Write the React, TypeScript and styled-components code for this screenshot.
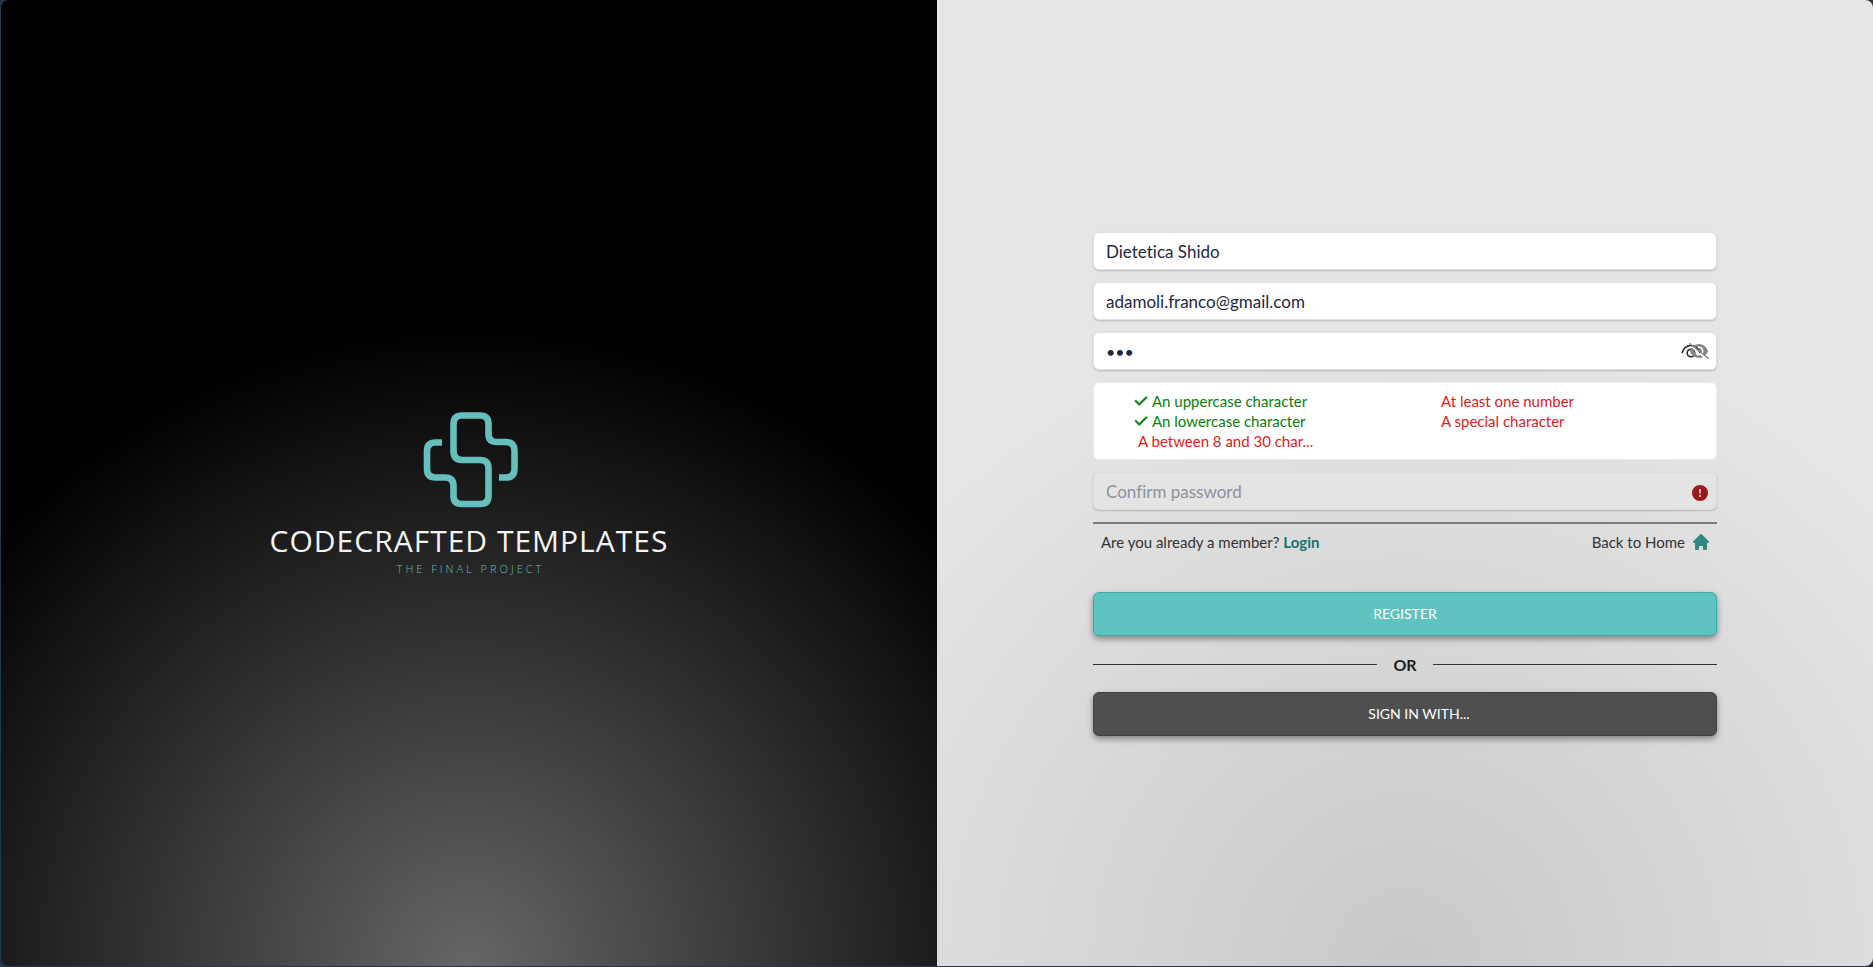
import React from 'react';
import styled, { createGlobalStyle } from 'styled-components';
import { FaCheck, FaEyeSlash } from 'react-icons/fa6';
import { BsExclamationCircleFill } from 'react-icons/bs';
import { HiHome } from 'react-icons/hi';

const GlobalStyle = createGlobalStyle`
  *, *::before, *::after { box-sizing: border-box; }
  body {
    margin: 0;
    background: #26374d;
    font-family: Lato, 'Open Sans', sans-serif;
    font-variant-ligatures: none;
  }
`;

const Page = styled.main`
  min-height: 100vh;
  padding: 0 0 1px 1px;
  display: grid;
`;

const Shell = styled.div`
  display: grid;
  grid-template-columns: 1fr 1fr;
  border-radius: 8px;
  overflow: hidden;
`;

const BrandPanel = styled.section`
  display: flex;
  flex-direction: column;
  align-items: center;
  justify-content: center;
  padding-top: 12px;
  background: radial-gradient(circle at 50% 100%, #666 0, #000 640px);
`;

const FormPanel = styled.section`
  display: flex;
  align-items: center;
  justify-content: center;
  background: radial-gradient(circle at 50% 100%, #c8c8c8 0, #e5e5e5 650px);
`;

const LogoMark = styled.svg`
  width: 120px;
  height: 120px;
`;

const BrandName = styled.h1`
  margin: 0;
  color: #f4f4f4;
  font: 400 30px/40px 'Open Sans', sans-serif;
  letter-spacing: 1px;
  white-space: nowrap;
`;

const Tagline = styled.p`
  margin: 0;
  color: #64bfbd;
  font: 300 11px/16px 'Open Sans', sans-serif;
  letter-spacing: 3px;
  text-indent: 3px;
`;

const Form = styled.form`
  width: 66.667%;
  display: flex;
  flex-direction: column;
  gap: 12px;
  padding-top: 2px;
`;

const Field = styled.div`
  position: relative;
  display: grid;
`;

const TextInput = styled.input<{ $plain?: boolean }>`
  width: 100%;
  height: 38px;
  padding: 0 12px;
  border: 1px solid ${(p) => (p.$plain ? '#dcdcdf' : '#e2e2e4')};
  border-radius: 6px;
  background: ${(p) => (p.$plain ? '#e4e4e4' : '#fff')};
  box-shadow: 0 1px 2px rgba(0, 0, 0, 0.2);
  color: #1e293b;
  font: 400 17px/24px Lato, sans-serif;
  font-variant-ligatures: none;
  outline: none;
  &[type='password']:not(:placeholder-shown) { font-size: 16px; }
  &::placeholder { color: #8b929e; opacity: 1; }
`;

const RevealButton = styled.button`
  position: absolute;
  right: 8px;
  top: 9px;
  display: flex;
  align-items: center;
  height: 20px;
  padding: 0;
  border: 0;
  background: none;
  svg + svg { margin-left: -12px; color: #858585; }
`;

const ErrorBadge = styled.span`
  position: absolute;
  right: 9px;
  top: 13px;
  display: grid;
  color: #991b1b;
`;

const Requirements = styled.ul`
  margin: 0;
  padding: 8px 40px;
  list-style: none;
  display: grid;
  grid-template-columns: 1fr 1fr;
  column-gap: 64px;
  border: 1px solid #ececec;
  border-radius: 6px;
  background: #fff;
  font-size: 15px;
  line-height: 20px;
`;

const Requirement = styled.li<{ $met?: boolean }>`
  display: flex;
  align-items: center;
  gap: 4px;
  padding-left: ${(p) => (p.$met ? 0 : 4)}px;
  color: ${(p) => (p.$met ? '#0a800a' : '#dd1c1c')};
  white-space: nowrap;
  svg { stroke: currentColor; stroke-width: 20px; }
`;

const LinksRow = styled.div`
  display: flex;
  justify-content: space-between;
  margin-bottom: 28px;
  padding: 8px 6px 0 8px;
  border-top: 2px solid #7b7b7b;
  color: #333;
  font-size: 15px;
  line-height: 20px;
`;

const LoginLink = styled.a`
  color: #0f766e;
  font-weight: 700;
  text-decoration: none;
`;

const HomeLink = styled.a`
  display: flex;
  align-items: center;
  gap: 6px;
  color: inherit;
  text-decoration: none;
  svg { color: #2f8883; }
`;

const ActionButton = styled.button<{ $primary?: boolean }>`
  height: 44px;
  padding: ${(p) => (p.$primary ? '0 6px' : '0 0 0 28px')};
  border: 1px solid ${(p) => (p.$primary ? '#3aaba6' : '#404040')};
  border-radius: 6px;
  background: ${(p) => (p.$primary ? '#5fc3c0' : '#4f4f4f')};
  box-shadow: 0 3px 6px rgba(0, 0, 0, 0.4);
  color: #fff;
  font: 400 14px/20px Lato, sans-serif;
`;

const Divider = styled.div`
  display: flex;
  align-items: center;
  gap: 16px;
  height: 32px;
  color: #1c1c1c;
  font-size: 16px;
  font-weight: 700;
  &::before, &::after {
    content: '';
    flex: 1;
    height: 1px;
    background: #333;
  }
`;

const rules = [
  { text: 'An uppercase character', met: true },
  { text: 'At least one number', met: false },
  { text: 'An lowercase character', met: true },
  { text: 'A special character', met: false },
  { text: 'A between 8 and 30 char...', met: false },
];

export default function App() {
  return (
    <>
      <GlobalStyle />
      <Page>
        <Shell>
          <BrandPanel>
            <LogoMark viewBox="-1 0 120 120" fill="none" stroke="#64bfbd" strokeWidth="6.6" aria-hidden="true">
              <path d="M89 76.5H96Q104.5 76.5 104.5 68V50Q104.5 41 96 41H87Q78.5 41 78.5 33V23Q78.5 14.5 70 14.5H52Q43.5 14.5 43.5 23V50Q43.5 59 52 59H70Q78.5 59 78.5 67.5V95Q78.5 103 70 103H52Q43.5 103 43.5 95V85Q43.5 76.5 35 76.5H25.5Q17 76.5 17 68V50Q17 41.5 25.5 41.5H32" />
            </LogoMark>
            <BrandName>CODECRAFTED TEMPLATES</BrandName>
            <Tagline>THE FINAL PROJECT</Tagline>
          </BrandPanel>
          <FormPanel>
            <Form onSubmit={(e) => e.preventDefault()}>
              <TextInput aria-label="Name" defaultValue="Dietetica Shido" />
              <TextInput type="email" aria-label="Email" defaultValue="adamoli.franco@gmail.com" />
              <Field>
                <TextInput type="password" aria-label="Password" placeholder="Password" defaultValue="abc" />
                <RevealButton type="button" aria-label="Show password">
                  <svg width="20" height="20" viewBox="0 0 20 20" fill="none" stroke="#222" strokeWidth="1.5">
                    <path d="M1 12C2.5 7 6 4.5 10 4.5S17.5 7 19 12" />
                    <circle cx="10" cy="12" r="3.8" />
                  </svg>
                  <FaEyeSlash size={20} />
                </RevealButton>
              </Field>
              <Requirements>
                {rules.map((r) => (
                  <Requirement key={r.text} $met={r.met}>
                    {r.met && <FaCheck size={14} />}
                    {r.text}
                  </Requirement>
                ))}
              </Requirements>
              <Field>
                <TextInput $plain type="password" aria-label="Confirm password" placeholder="Confirm password" />
                <ErrorBadge><BsExclamationCircleFill size={16} /></ErrorBadge>
              </Field>
              <LinksRow>
                <span>Are you already a member? <LoginLink href="#login">Login</LoginLink></span>
                <HomeLink href="#home">Back to Home <HiHome size={20} /></HomeLink>
              </LinksRow>
              <ActionButton $primary type="submit">REGISTER</ActionButton>
              <Divider>OR</Divider>
              <ActionButton type="button">SIGN IN WITH...</ActionButton>
            </Form>
          </FormPanel>
        </Shell>
      </Page>
    </>
  );
}
